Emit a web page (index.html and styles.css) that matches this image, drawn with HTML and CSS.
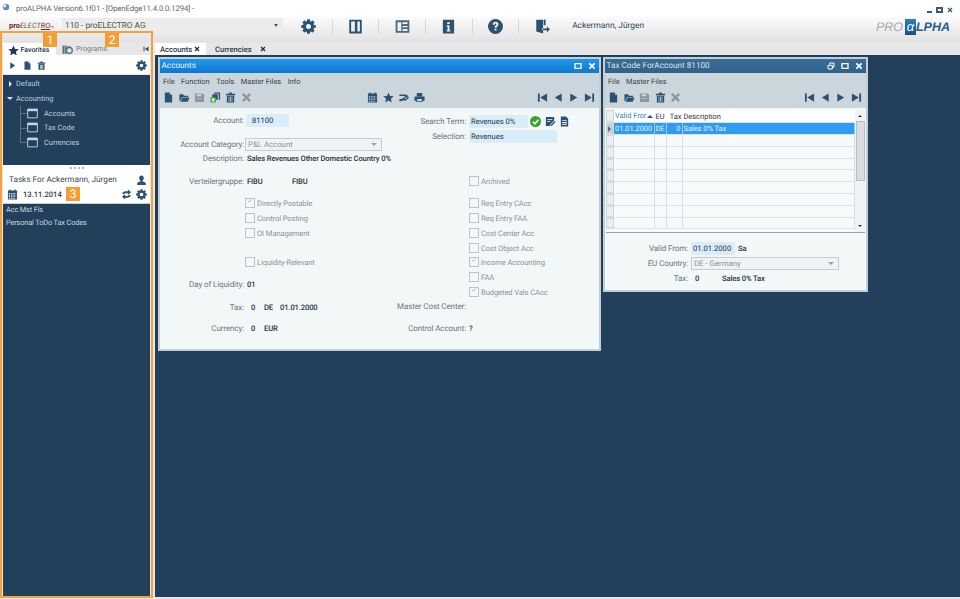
FILE: index.html
```html
<!DOCTYPE html>
<html lang="en">
<head>
<meta charset="utf-8">
<title>proALPHA</title>
<link rel="stylesheet" href="styles.css">
</head>
<body>
<svg class="defs" width="0" height="0" aria-hidden="true">
  <symbol id="i-gear" viewBox="0 0 24 24">
    <circle cx="12" cy="12" r="6.5" fill="none" stroke="currentColor" stroke-width="5"/>
    <g fill="currentColor">
      <rect x="9.5" y="0.5" width="5" height="5" rx=".6"/><rect x="9.5" y="18.5" width="5" height="5" rx=".6"/>
      <rect x="0.5" y="9.5" width="5" height="5" rx=".6"/><rect x="18.5" y="9.5" width="5" height="5" rx=".6"/>
      <rect x="9.5" y="0.5" width="5" height="5" rx=".6" transform="rotate(45 12 12)"/><rect x="9.5" y="18.5" width="5" height="5" rx=".6" transform="rotate(45 12 12)"/>
      <rect x="0.5" y="9.5" width="5" height="5" rx=".6" transform="rotate(45 12 12)"/><rect x="18.5" y="9.5" width="5" height="5" rx=".6" transform="rotate(45 12 12)"/>
    </g>
  </symbol>
  <symbol id="i-doc" viewBox="0 0 24 24"><path fill="currentColor" d="M4 1h10l6 6v16H4zM15 1.500V6h4.500z"/></symbol>
  <symbol id="i-open" viewBox="0 0 24 24"><path fill="currentColor" d="M1 20V5h8l2 3h9v3H7L2 20zM8 12h15l-4 9H3z"/></symbol>
  <symbol id="i-save" viewBox="0 0 24 24"><path fill="currentColor" fill-rule="evenodd" d="M2 3h17l3 3v16H2zM6 5v4h10V5zM6 14v1.500h12V14z"/></symbol>
  <symbol id="i-copy" viewBox="0 0 24 24"><path fill="currentColor" d="M9 1h13v16h-3V4H9z"/><path fill="currentColor" d="M5 5h12v12H5z"/><rect x="1" y="11" width="12" height="12" rx="2" fill="#3fb13a"/><path d="M7 13v8M3 17h8" stroke="#fff" stroke-width="2.500"/></symbol>
  <symbol id="i-trash" viewBox="0 0 24 24"><path fill="currentColor" fill-rule="evenodd" d="M2 4h7V1h6v3h7v3H2zM4 8h16v15H4zM8 10v11h1.500V10zM11.200 10v11h1.600V10zM14.500 10v11H16V10z"/></symbol>
  <symbol id="i-x" viewBox="0 0 24 24"><path d="M4 4l16 16M20 4L4 20" stroke="currentColor" stroke-width="5" fill="none"/></symbol>
  <symbol id="i-star" viewBox="0 0 24 24"><path fill="currentColor" d="M12 1l3.300 7.600 8.200.8-6.200 5.400 1.900 8.100-7.200-4.300-7.200 4.300 1.900-8.100L.5 9.400l8.200-.8z"/></symbol>
  <symbol id="i-play" viewBox="0 0 24 24"><path fill="currentColor" d="M6 3l13 9-13 9z"/></symbol>
  <symbol id="i-cal" viewBox="0 0 24 24"><path fill="currentColor" fill-rule="evenodd" d="M2 3h3V1h3v2h8V1h3v2h3v20H2zM4 9v3h3V9zM9 9v3h3V9zM14 9v3h3V9zM19 9v3h1V9zM4 14v3h3v-3zM9 14v3h3v-3zM14 14v3h3v-3zM19 14v3h1v-3zM4 19v2h3v-2zM9 19v2h3v-2zM14 19v2h3v-2z"/></symbol>
  <symbol id="i-tag" viewBox="0 0 24 24"><path fill="none" stroke="currentColor" stroke-width="3" d="M3 7h14l5 5-5 5H3"/><path fill="currentColor" d="M2 20L20 6l1 3L7 20z"/></symbol>
  <symbol id="i-print" viewBox="0 0 24 24"><path fill="currentColor" fill-rule="evenodd" d="M6 2h12v7H6zM1 10h22v9h-4v3H5v-3H1zM7 15v5h10v-5z"/></symbol>
  <symbol id="i-first" viewBox="0 0 24 24"><path fill="currentColor" d="M2 3h4v18H2zM22 3v18L7 12z"/></symbol>
  <symbol id="i-prev" viewBox="0 0 24 24"><path fill="currentColor" d="M19 3v18L4 12z"/></symbol>
  <symbol id="i-next" viewBox="0 0 24 24"><path fill="currentColor" d="M5 3v18l15-9z"/></symbol>
  <symbol id="i-last" viewBox="0 0 24 24"><path fill="currentColor" d="M2 3v18l15-9zM18 3h4v18h-4z"/></symbol>
  <symbol id="i-panel1" viewBox="0 0 24 24"><path fill="currentColor" fill-rule="evenodd" d="M2 1h20v22H2zM5 4v16h6V4zM15 4v16h4V4z"/></symbol>
  <symbol id="i-panel2" viewBox="0 0 24 24"><path fill="currentColor" fill-rule="evenodd" d="M1 2h22v20H1zM4 5v14h6V5zM12 5v3h8V5zM12 11v2h8v-2zM12 16v3h8v-3z" opacity=".85"/></symbol>
  <symbol id="i-info" viewBox="0 0 24 24"><path fill="currentColor" fill-rule="evenodd" d="M3 1h18v22H3zM10 5v3h4V5zM9 10v2h1.500v6H9v2h6v-2h-1.500v-8z"/></symbol>
  <symbol id="i-help" viewBox="0 0 24 24"><path fill="currentColor" fill-rule="evenodd" d="M12 0a12 12 0 1 0 0 24 12 12 0 0 0 0-24zM7.500 9c0-3 2-4.500 4.700-4.500s4.500 1.500 4.500 3.800c0 3.400-3.200 3.200-3.200 5.700h-3c0-3.800 3-3.700 3-5.500 0-.9-.6-1.400-1.400-1.400-1 0-1.500.7-1.500 1.900zM10.500 15.500h3v3h-3z"/></symbol>
  <symbol id="i-exit" viewBox="0 0 24 24"><path fill="currentColor" d="M2 1h11v14h-2v2h2v6l-11-3z"/><path fill="currentColor" d="M14 1h3v9h-3z"/><path fill="currentColor" d="M13 15h6v-3l5 4.500-5 4.500v-3h-6z"/></symbol>
  <symbol id="i-user" viewBox="0 0 24 24"><path fill="currentColor" d="M12 1c3 0 5 2.300 5 5.500 0 2.500-1 4.500-2.500 5.500v2c3 1 7 1.500 7 5v3h-19v-3c0-3.500 4-4 7-5v-2C8 11 7 9 7 6.500 7 3.300 9 1 12 1z"/></symbol>
  <symbol id="i-sync" viewBox="0 0 24 24"><path fill="currentColor" d="M3 11c0-4 3-6 7-6h5V1l7 6-7 6V9h-5c-2 0-3 1-3 2zM21 13c0 4-3 6-7 6H9v4l-7-6 7-6v4h5c2 0 3-1 3-2z"/></symbol>
  <symbol id="i-edit" viewBox="0 0 24 24"><path fill="currentColor" d="M2 2h18v8l-8 8-1 4H2z"/><path fill="#fff" d="M5 7h11v1.500H5zM5 11h7v1.500H5z"/><path fill="currentColor" d="M21 11l2 2-8 8-3 1 1-3z"/></symbol>
  <symbol id="i-note" viewBox="0 0 24 24"><path fill="currentColor" fill-rule="evenodd" d="M4 1h11l5 5v17H4zM7 9v2h10V9zM7 13v2h10v-2zM7 17v2h10v-2z"/></symbol>
  <symbol id="i-ok" viewBox="0 0 24 24"><circle cx="12" cy="12" r="12" fill="#35a12e"/><path d="M6 12.500l4.500 4.500L18.500 8" stroke="#fff" stroke-width="3.500" fill="none"/></symbol>
  <symbol id="i-window" viewBox="0 0 24 24"><path fill="none" stroke="currentColor" stroke-width="2" d="M1.500 2.500h21v19h-21z"/><path fill="currentColor" d="M1 2h22v5H1z"/></symbol>
  <symbol id="i-programs" viewBox="0 0 24 24"><path fill="currentColor" d="M1 3h4v18H1zM6 3h4v18H6z"/><circle cx="16" cy="14" r="6.500" fill="none" stroke="currentColor" stroke-width="3"/><path fill="currentColor" d="M11 5h8v3h-8z"/></symbol>
  <symbol id="i-restore" viewBox="0 0 24 24"><path fill="none" stroke="currentColor" stroke-width="3" d="M8 8V3h13v12h-5"/><path fill="none" stroke="currentColor" stroke-width="3" d="M3 10h13v11H3z"/></symbol>
  <symbol id="i-max" viewBox="0 0 24 24"><path fill="none" stroke="currentColor" stroke-width="4" d="M3 5h18v14H3z"/></symbol>
</svg>

<div class="app">
  <div class="titlebar">
    <svg class="app-icon" viewBox="0 0 10 10"><circle cx="5" cy="5" r="4" fill="#5d8db5"/><circle cx="3.500" cy="3.500" r="2" fill="#dbe8f2"/></svg>
    <span>proALPHA Version6.1f01 - [OpenEdge11.4.0.0.1294] -</span>
    <div class="winctl"><span class="min"></span><span class="max"></span><svg class="ico9"><use href="#i-x"/></svg></div>
  </div>

  <div class="header">
    <div class="brand"><b>pro</b><i>ELECT<u>RO</u></i><small>m</small></div>
    <div class="combo"><span>110 - proELECTRO AG</span><em></em></div>
    <div class="tools">
      <div class="tool"><svg class="ico15"><use href="#i-gear"/></svg></div>
      <div class="tool"><svg class="ico15"><use href="#i-panel1"/></svg></div>
      <div class="tool"><svg class="ico15"><use href="#i-panel2"/></svg></div>
      <div class="tool"><svg class="ico15"><use href="#i-info"/></svg></div>
      <div class="tool"><svg class="ico15"><use href="#i-help"/></svg></div>
      <div class="tool last"><svg class="ico15"><use href="#i-exit"/></svg></div>
    </div>
    <div class="username">Ackermann, Jürgen</div>
    <div class="logo"><span class="pro">PRO</span><span class="alpha">α</span><span class="lpha">LPHA</span></div>
  </div>

  <div class="body">
    <aside class="sidebar">
      <div class="sidetabs">
        <div class="sidetab active"><svg class="ico10"><use href="#i-star"/></svg>Favorites</div>
        <div class="sidetab"><svg class="ico10"><use href="#i-programs"/></svg>Programs</div>
        <svg class="ico6 pin"><use href="#i-first"/></svg>
      </div>
      <div class="sidetools">
        <svg class="ico9"><use href="#i-play"/></svg>
        <svg class="ico9"><use href="#i-doc"/></svg>
        <svg class="ico9"><use href="#i-trash"/></svg>
        <svg class="ico11 push"><use href="#i-gear"/></svg>
      </div>
      <div class="tree">
        <div class="node"><span class="arrow-r"></span>Default</div>
        <div class="node"><span class="arrow-d"></span>Accounting</div>
        <div class="leaves">
          <div class="leaf"><svg class="ico11"><use href="#i-window"/></svg>Accounts</div>
          <div class="leaf"><svg class="ico11"><use href="#i-window"/></svg>Tax Code</div>
          <div class="leaf"><svg class="ico11"><use href="#i-window"/></svg>Currencies</div>
        </div>
      </div>
      <div class="tasks-head">
        <div class="grip"></div>
        <div class="tasks-title"><span>Tasks For Ackermann, Jürgen</span><svg class="ico11"><use href="#i-user"/></svg></div>
        <div class="tasks-date">
          <svg class="ico11"><use href="#i-cal"/></svg><span>13.11.2014</span>
          <svg class="ico11 push"><use href="#i-sync"/></svg><svg class="ico11"><use href="#i-gear"/></svg>
        </div>
      </div>
      <div class="tasks">
        <div>Acc Mst Fls</div>
        <div>Personal ToDo Tax Codes</div>
      </div>
    </aside>

    <main class="main">
      <div class="tabs">
        <div class="tab active">Accounts<svg class="ico6"><use href="#i-x"/></svg></div>
        <div class="tab">Currencies<svg class="ico6"><use href="#i-x"/></svg></div>
      </div>
      <div class="desktop">
        <section class="win win-accounts">
          <div class="wtitle focus"><span>Accounts</span><svg class="ico8"><use href="#i-max"/></svg><svg class="ico8"><use href="#i-x"/></svg></div>
          <div class="wchrome">
            <div class="menu"><span>File</span><span>Function</span><span>Tools</span><span>Master Files</span><span>Info</span></div>
            <div class="wtools">
              <svg class="ico10"><use href="#i-doc"/></svg>
              <svg class="ico10"><use href="#i-open"/></svg>
              <svg class="ico10 dis"><use href="#i-save"/></svg>
              <svg class="ico10"><use href="#i-copy"/></svg>
              <svg class="ico10"><use href="#i-trash"/></svg>
              <svg class="ico10 dis"><use href="#i-x"/></svg>
              <div class="midtools">
                <svg class="ico10"><use href="#i-cal"/></svg>
                <svg class="ico10"><use href="#i-star"/></svg>
                <svg class="ico10"><use href="#i-tag"/></svg>
                <svg class="ico10"><use href="#i-print"/></svg>
              </div>
              <div class="nav">
                <svg class="ico10"><use href="#i-first"/></svg>
                <svg class="ico10"><use href="#i-prev"/></svg>
                <svg class="ico10"><use href="#i-next"/></svg>
                <svg class="ico10"><use href="#i-last"/></svg>
              </div>
            </div>
          </div>
          <div class="form">
            <div class="col col-l">
              <div class="row"><label>Account:</label><div class="input w-account"><span>81100</span></div></div>
              <div class="row m10"><label>Account Category:</label><div class="select w-cat">P&amp;L Account<em></em></div></div>
              <div class="row"><label>Description:</label><b>Sales Revenues Other Domestic Country 0%</b></div>
              <div class="row m9"><label>Verteilergruppe:</label><b class="w-fibu">FIBU</b><b>FIBU</b></div>
              <div class="row m8"><label></label><div class="check on">Directly Postable</div></div>
              <div class="row m1"><label></label><div class="check">Control Posting</div></div>
              <div class="row m1"><label></label><div class="check">OI Management</div></div>
              <div class="row m15"><label></label><div class="check">Liquidity-Relevant</div></div>
              <div class="row m8"><label>Day of Liquidity:</label><b>01</b></div>
              <div class="row m9"><label>Tax:</label><b class="w-num">0</b><b class="w-de">DE</b><b>01.01.2000</b></div>
              <div class="row m7"><label>Currency:</label><b class="w-num">0</b><b>EUR</b></div>
            </div>
            <div class="col col-r">
              <div class="row"><label>Search Term:</label><div class="input w-search">Revenues 0%</div><svg class="ico10 after"><use href="#i-ok"/></svg><svg class="ico10 after"><use href="#i-edit"/></svg><svg class="ico10 after"><use href="#i-note"/></svg></div>
              <div class="row m1"><label>Selection:</label><div class="input w-sel">Revenues</div></div>
              <div class="row m31"><label></label><div class="check">Archived</div></div>
              <div class="row m8"><label></label><div class="check">Req Entry CAcc</div></div>
              <div class="row m1"><label></label><div class="check">Req Entry FAA</div></div>
              <div class="row m1"><label></label><div class="check">Cost Center Acc</div></div>
              <div class="row m1"><label></label><div class="check">Cost Object Acc</div></div>
              <div class="row"><label></label><div class="check on">Income Accounting</div></div>
              <div class="row m1"><label></label><div class="check">FAA</div></div>
              <div class="row m1"><label></label><div class="check on">Budgeted Vals CAcc</div></div>
              <div class="row"><label>Master Cost Center:</label></div>
              <div class="row m8"><label>Control Account:</label><b>?</b></div>
            </div>
          </div>
        </section>

        <section class="win win-tax">
          <div class="wtitle"><span>Tax Code ForAccount 81100</span><svg class="ico8"><use href="#i-restore"/></svg><svg class="ico8"><use href="#i-max"/></svg><svg class="ico8"><use href="#i-x"/></svg></div>
          <div class="wchrome">
            <div class="menu"><span>File</span><span>Master Files</span></div>
            <div class="wtools">
              <svg class="ico10"><use href="#i-doc"/></svg>
              <svg class="ico10"><use href="#i-open"/></svg>
              <svg class="ico10 dis"><use href="#i-save"/></svg>
              <svg class="ico10"><use href="#i-trash"/></svg>
              <svg class="ico10 dis"><use href="#i-x"/></svg>
              <div class="nav">
                <svg class="ico10"><use href="#i-first"/></svg>
                <svg class="ico10"><use href="#i-prev"/></svg>
                <svg class="ico10"><use href="#i-next"/></svg>
                <svg class="ico10"><use href="#i-last"/></svg>
              </div>
            </div>
          </div>
          <div class="tax-body">
            <div class="gridbox">
              <div class="grid">
                <div class="grow ghead"><i></i><span class="c1 sorted">Valid Fror<em></em></span><span class="c2">EU</span><span class="c3">Tax</span><span class="c4">Description</span></div>
                <div class="grow sel"><i></i><span class="c1">01.01.2000</span><span class="c2">DE</span><span class="c3">0</span><span class="c4">Sales 0% Tax</span></div>
                <div class="grow"><i></i><span class="c1"></span><span class="c2"></span><span class="c3"></span><span class="c4"></span></div>
                <div class="grow"><i></i><span class="c1"></span><span class="c2"></span><span class="c3"></span><span class="c4"></span></div>
                <div class="grow"><i></i><span class="c1"></span><span class="c2"></span><span class="c3"></span><span class="c4"></span></div>
                <div class="grow"><i></i><span class="c1"></span><span class="c2"></span><span class="c3"></span><span class="c4"></span></div>
                <div class="grow"><i></i><span class="c1"></span><span class="c2"></span><span class="c3"></span><span class="c4"></span></div>
                <div class="grow"><i></i><span class="c1"></span><span class="c2"></span><span class="c3"></span><span class="c4"></span></div>
                <div class="grow"><i></i><span class="c1"></span><span class="c2"></span><span class="c3"></span><span class="c4"></span></div>
                <div class="grow"><i></i><span class="c1"></span><span class="c2"></span><span class="c3"></span><span class="c4"></span></div>
              </div>
              <div class="scroll"><em class="up"></em><div class="thumb"></div><em class="down"></em></div>
            </div>
            <div class="tax-form">
              <div class="row"><label>Valid From:</label><div class="input w-valid">01.01.2000</div><b class="after-text">Sa</b></div>
              <div class="row m1"><label>EU Country:</label><div class="select w-eu">DE - Germany<em></em></div></div>
              <div class="row m1"><label>Tax:</label><b class="w-num2">0</b><b>Sales 0% Tax</b></div>
            </div>
          </div>
        </section>
      </div>
    </main>
  </div>

  <div class="outline"></div>
  <div class="badge b1">1</div>
  <div class="badge b2">2</div>
  <div class="badge b3">3</div>
</div>
</body>
</html>
```
FILE: styles.css
```css
* { box-sizing: border-box; }
html, body { margin: 0; padding: 0; }
body { width: 960px; height: 599px; overflow: hidden; font-family: Roboto, "Noto Sans", sans-serif; font-size: 8px; color: #333; background: #e6e6e6; text-rendering: geometricPrecision; }
.defs { position: absolute; }
svg { display: block; flex: none; color: #2b5371; }
.ico6 { width: 6px; height: 6px; color: #1d2f40; }
.ico8 { width: 8px; height: 8px; color: #fff; }
.ico9 { width: 9px; height: 11px; }
.ico10 { width: 11px; height: 11px; }
.ico11 { width: 11px; height: 11px; }
.ico15 { width: 15px; height: 15px; }
.dis { color: #8d979e; }
.push { margin-left: auto; }

.app { position: relative; width: 960px; height: 599px; display: flex; flex-direction: column; }

.titlebar { height: 17px; background: #fff; display: flex; align-items: center; padding: 0 5px 0 2px; color: #666; font-size: 7.8px; letter-spacing: -.12px; }
.app-icon { width: 8px; height: 8px; margin-right: 6px; margin-top: -3px; }
.winctl { margin-left: auto; display: flex; align-items: center; gap: 4px; margin-top: 2px; padding-right: 2px; }
.winctl .ico9 { width: 6px; height: 6px; color: #3d5a70; }
.winctl .min { width: 5px; height: 2px; background: #3d5a70; margin-top: 4px; }
.winctl .max { width: 7px; height: 6px; border: 2px solid #3d5a70; }

.header { height: 25px; display: flex; align-items: flex-start; padding-top: 2px; background: linear-gradient(#fbfbfb, #e2e2e2); }
.brand { width: 42px; margin-left: 9px; margin-right: 1px; padding-top: 1px; font-size: 7.4px; line-height: 11px; color: #7a1d1d; white-space: nowrap; }
.brand i { color: #555; }
.brand u { color: #8a2a2a; }
.brand small { font-size: 4px; color: #a33; }
.combo { width: 221px; height: 15px; margin: -1px 0 0 10px; padding: 0 3px; display: flex; align-items: center; background: #ececec; color: #555; font-size: 8.300px; }
.combo em { width: 0; height: 0; margin-left: auto; margin-right: 2px; border: 2px solid transparent; border-top: 3px solid #555; border-bottom: 0; }
.tools { display: flex; margin-left: 3px; }
.tool { width: 46.7px; height: 15px; display: flex; justify-content: center; border-right: 1px solid #d7d7d7; }
.tool.last { border-right: 0; }
.username { margin-left: 6px; color: #34495c; font-size: 8.4px; line-height: 15px; white-space: nowrap; }
.logo { margin-left: auto; margin-right: 10px; display: flex; align-items: center; font-family: "Liberation Sans", sans-serif; font-style: italic; font-size: 12.5px; height: 16px; }
.logo .pro { color: #a5abb0; }
.logo .alpha { width: 11px; height: 16px; line-height: 15px; margin: 0 0 0 2px; text-align: center; color: #fff; background: linear-gradient(#2f7fc1, #15507f); font-size: 13px; }
.logo .lpha { color: #1f5e93; font-weight: bold; }

.body { flex: 1; display: flex; min-height: 0; }

.sidebar { width: 155px; display: flex; flex-direction: column; padding: 0 5px 3px 3px; background: #e6e6e6; }
.sidetabs { height: 13px; flex: none; display: flex; align-items: flex-end; }
.sidetab { height: 10px; margin-bottom: 0; display: flex; align-items: center; gap: 3px; padding: 0 4px; color: #6d7780; font-size: 7.200px; line-height: 8px; }
.sidetab.active { width: 53px; height: 12px; padding: 2px 0 0 5px; gap: 1.500px; background: #fff; color: #1f3549; font-weight: 500; font-size: 7px; }
.sidetab + .sidetab { margin-left: 2px; width: 52px; margin-bottom: 1px; }
.sidetab:not(.active) svg { color: #5a7385; }
.sidetab.active svg { color: #1f3a55; }
.pin { margin-left: auto; align-self: center; margin-right: 1px; color: #2b5371; }
.sidetools { height: 19px; flex: none; background: #fff; display: flex; align-items: center; gap: 5.500px; padding: 2px 3px 0 5px; margin-bottom: 1px; }
.tree { height: 90px; flex: none; background: #223f5c; color: #bfccd6; padding-top: 1px; font-size: 7.400px; }
.node { height: 15px; display: flex; align-items: center; padding-left: 3px; gap: 4px; }
.arrow-r { width: 0; height: 0; border: 3px solid transparent; border-left: 3px solid #dfe7ec; border-right: 0; margin-left: 3px; }
.arrow-d { width: 0; height: 0; border: 3px solid transparent; border-top: 3px solid #dfe7ec; border-bottom: 0; margin-left: 1px; margin-right: -1px; }
.leaves { margin-left: 17px; border-left: 1px solid #56718a; height: 37px; }
.leaf { height: 14.600px; display: flex; align-items: center; gap: 6px; position: relative; padding-left: 6px; }
.leaf::before { content: ""; position: absolute; left: 0; top: 7px; width: 6px; border-top: 1px solid #56718a; }
.leaf svg { color: #c9d5de; }
.tasks-head { height: 39px; flex: none; background: #fff; border-bottom: 1px solid #c5cdd3; }
.grip { width: 14px; height: 2px; margin: 2px auto 4px; border-top: 2px dotted #aeb6bc; }
.tasks-title { height: 14px; display: flex; align-items: center; justify-content: space-between; padding: 0 3px 0 6px; font-size: 8.200px; color: #3a4854; }
.tasks-date { height: 14px; display: flex; align-items: center; gap: 4px; padding: 0 3px 0 4px; font-size: 7.600px; font-weight: 500; color: #2a3b4a; }
.tasks-date span { margin-left: 1px; }
.tasks { flex: 1; background: #223f5c; color: #c9d5de; padding: 1px 0 0 3px; font-size: 7.400px; letter-spacing: -.15px; }
.tasks div { height: 12.500px; line-height: 9px; }

.main { flex: 1; display: flex; flex-direction: column; min-width: 0; padding-bottom: 2px; }
.tabs { height: 13px; flex: none; display: flex; align-items: flex-end; }
.tab { height: 12px; display: flex; align-items: center; padding: 0 5px; color: #2a3947; font-weight: 500; font-size: 7.6px; white-space: nowrap; }
.tab.active { background: #fff; width: 51px; margin-right: 5px; gap: 2px; }
.tab:not(.active) { padding-left: 4px; gap: 8px; }
.desktop { position: relative; flex: 1; background: #223f5c; }

.win { position: absolute; top: 2px; background: #f2f7f8; border: 2px solid #c3ced6; display: flex; flex-direction: column; }
.win-accounts { left: 3px; width: 443px; height: 294px; }
.win-tax { left: 448px; width: 265px; height: 235px; }
.wtitle { height: 14px; flex: none; display: flex; align-items: center; gap: 6px; padding: 0 3px 0 1.500px; background: linear-gradient(#3a6d96, #2f618a); color: #d8e4ec; font-size: 8.200px; }
.wtitle.focus { background: linear-gradient(#2196ee, #0f78cf); color: #e8f4fd; }
.wtitle span { margin-right: auto; }
.wchrome { height: 35px; flex: none; background: #cbd5dc; }
.menu { height: 16px; display: flex; align-items: center; gap: 6.500px; padding-left: 3px; color: #36434e; font-size: 7.400px; }
.wtools { height: 17px; display: flex; align-items: center; gap: 4.500px; padding: 0 4.500px 0 3px; }
.midtools { display: flex; gap: 4.500px; margin-left: 111px; }
.nav { margin-left: auto; display: flex; gap: 4.500px; }

.form { flex: 1; display: flex; }
.col-l { width: 222px; padding-top: 5px; }
.col-r { flex: 1; padding-top: 6px; }
.row { height: 14px; display: flex; align-items: center; white-space: nowrap; }
.row label { flex: none; color: #6c7680; text-align: right; padding-right: 3px; letter-spacing: -.1px; }
.col-l label { width: 87px; }
.col-r label { width: 87px; }
.row b { font-weight: 500; color: #273543; font-size: 7.600px; letter-spacing: -.12px; }
.m1 { margin-top: 1px; } .m7 { margin-top: 7px; } .m8 { margin-top: 8px; } .m9 { margin-top: 9px; }
.m10 { margin-top: 10px; } .m15 { margin-top: 15px; } .m31 { margin-top: 31px; }
.input { height: 13px; line-height: 11px; background: #d8edfc; border: 1px solid #e4ebef; color: #273543; padding-left: 1px; font-size: 7.600px; }
.input span { padding-left: 4px; }
.w-account { width: 43px; margin-left: -1px; }
.w-search { width: 59px; }
.w-sel { width: 88px; }
.w-valid { width: 44px; }
.select { height: 13px; display: flex; align-items: center; padding-left: 2px; background: #f0f3f5; border: 1px solid #c6cdd2; color: #8d969d; font-size: 7.800px; }
.select em { margin-left: auto; margin-right: 4px; width: 0; height: 0; border: 3px solid transparent; border-top: 3px solid #9aa3aa; border-bottom: 0; }
.w-cat { width: 149px; margin-left: -2px; }
.w-eu { width: 148px; }
.after { margin-left: 3.500px; }
.row .input + .after { margin-left: 2px; }
.w-fibu { width: 45px; }
.w-num { width: 17px; padding-left: 4px; }
.w-de { width: 16px; }
.check { display: flex; align-items: center; color: #8b949b; gap: 2px; font-size: 7.600px; letter-spacing: -.1px; }
.col-l .check { margin-left: -2px; }
.check::before { content: ""; width: 8px; height: 8px; border: 1px solid #bcc4c9; background: #f5f7f8; font-size: 6px; line-height: 6px; text-align: center; color: #9aa3aa; }
.check.on::before { content: "✓"; }

.tax-body { flex: 1; display: flex; flex-direction: column; padding: 2px 1px 1px; }
.gridbox { height: 123px; flex: none; display: flex; border-bottom: 1px solid #9aa5ad; background: #f6fafb; }
.grid { flex: 1; overflow: hidden; font-size: 7.400px; }
.grow { height: 11.800px; display: flex; border-bottom: 1px solid #dbe4ea; }
.grow i { width: 8px; flex: none; background: #eceff1; border: 1px solid #cfd6db; margin-right: 0; }
.grow span { flex: none; border-right: 1px solid #d5dfe5; padding: 0 1px; line-height: 10px; white-space: nowrap; overflow: hidden; }
.c1 { width: 40.500px; } .c2 { width: 12px; } .c3 { width: 16px; text-align: right; } .c4 { width: 172.500px; }
.ghead { background: #fff; height: 13px; }
.ghead span { border-right: 0; color: #333; line-height: 14px; }
.sorted { color: #2e7fc4 !important; display: flex; align-items: center; gap: 1px; }
.sorted em { width: 0; height: 0; border: 3px solid transparent; border-bottom: 3px solid #2b5371; border-top: 0; }
.sel { background: #2f9bf3; height: 12px; }
.sel span { color: #e7f4fe; border-right-color: #8ec8f5; line-height: 12px; }
.sel i { position: relative; background: #c9cfd3; }
.sel i::after { content: ""; position: absolute; left: 1px; top: 2px; border: 3px solid transparent; border-left: 3px solid #5c6a75; border-right: 0; }
.scroll { width: 10px; flex: none; background: #f0f2f3; display: flex; flex-direction: column; align-items: center; padding-top: 5px; }
.scroll em { width: 0; height: 0; border: 2px solid transparent; }
.up { border-bottom: 2px solid #333 !important; border-top: 0 !important; }
.down { border-top: 2px solid #333 !important; border-bottom: 0 !important; margin-top: auto; margin-bottom: 5px; }
.thumb { width: 9px; height: 60px; margin-top: 4px; background: #d9dddf; border: 1px solid #b8bfc4; }
.tax-form { padding-top: 8px; }
.tax-form label { width: 85px; }
.after-text { margin-left: 3px; }
.w-num2 { width: 31px; padding-left: 4px; }

.outline { position: absolute; left: 0; top: 31px; width: 153px; height: 567px; border: 2px solid #f5a13c; pointer-events: none; }
.badge { position: absolute; width: 14px; height: 14px; background: #f59d33; color: #fff; font-size: 12px; line-height: 14px; text-align: center; }
.b1 { left: 43px; top: 33px; }
.b2 { left: 105px; top: 33px; }
.b3 { left: 66px; top: 187px; }
```
